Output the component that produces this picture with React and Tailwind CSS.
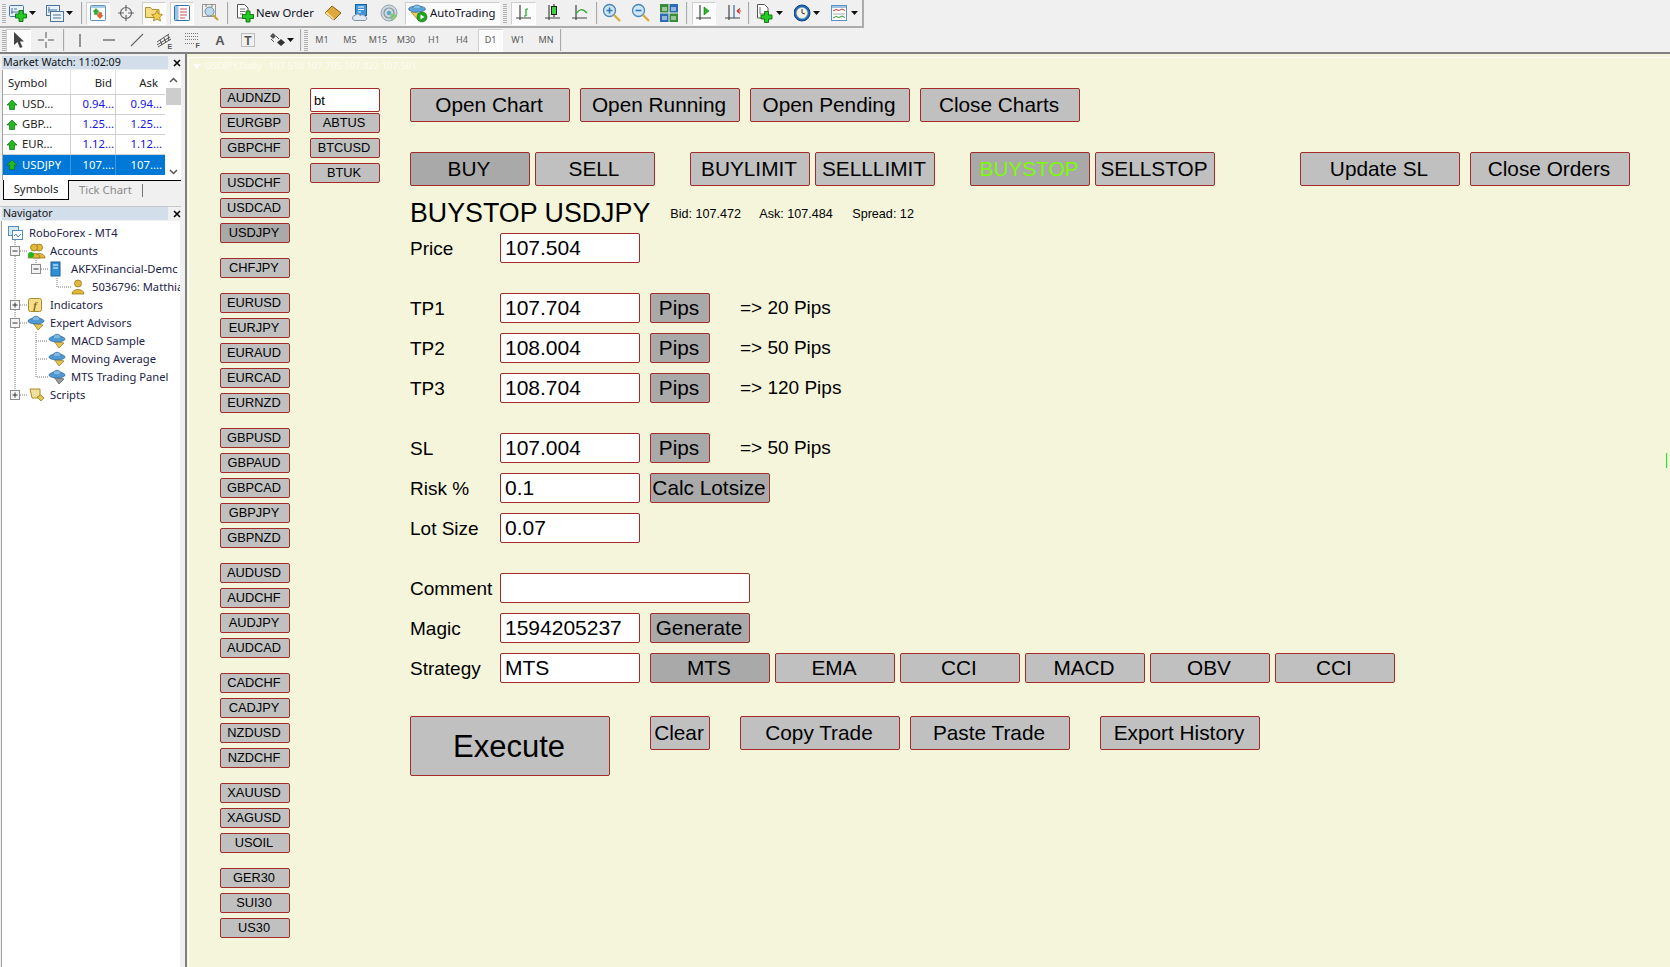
import React from "react";

const FONT = "font-['Noto_Sans','Open_Sans',sans-serif]";
const ARIAL = "font-['Liberation_Sans',Arial,sans-serif]";

const Plus = ({ x = 0, y = 0, s = 1 }) => (
  <path transform={`translate(${x} ${y}) scale(${s})`} d="M3.500 0h4v3.500H11v4H7.500V11h-4V7.500H0v-4h3.500z" fill="#22cc22" stroke="#0b6e0b" strokeWidth="0.900" />
);
const Axes = () => (
  <path d="M6 2v15M2 15h15" stroke="#444" strokeWidth="1.200" fill="none" />
);

const I = {
  grip: (h) => (
    <svg width="4" height={h} viewBox={`0 0 4 ${h}`}>
      {Array.from({ length: Math.floor(h / 2) }).map((_, i) => (
        <rect key={i} x="0" y={i * 2 + 1} width="4" height="1" fill="#b0b0b0" />
      ))}
    </svg>
  ),
  arr: (
    <svg width="8" height="5" viewBox="0 0 8 5"><path d="M0 0h7L3.500 4z" fill="#111" /></svg>
  ),
  newChart: (
    <svg width="18" height="18" viewBox="0 0 18 18">
      <rect x="0.500" y="1.500" width="14" height="11" rx="1" fill="#e8f0f8" stroke="#4a74a0" />
      <path d="M3 4v6M2 8h8M5 5h3" stroke="#4a74a0" fill="none" />
      <Plus x="6.500" y="6.500" />
    </svg>
  ),
  profile: (
    <svg width="18" height="18" viewBox="0 0 18 18">
      <rect x="0.500" y="1.500" width="13" height="10" fill="#e8f0f8" stroke="#4a74a0" />
      <rect x="4.500" y="7.500" width="13" height="10" fill="#eef4fa" stroke="#4a74a0" />
      <path d="M3 3v6M2 6h9M7 11h8M7 14h8" stroke="#4a74a0" fill="none" />
    </svg>
  ),
  marketWatch: (
    <svg width="16" height="16" viewBox="0 0 16 16">
      <rect x="0.500" y="0.500" width="15" height="15" rx="1" fill="#fff" stroke="#5b93c4" />
      <rect x="1" y="1" width="14" height="2" fill="#a9cbe8" />
      <path d="M6 3.500l3 3H7.500v3h-3v-3H3z" fill="#22b322" stroke="#127312" strokeWidth="0.400" />
      <path d="M10 13.500l-3-3h1.500v-3h3v3H13z" fill="#ef5a2a" stroke="#a83510" strokeWidth="0.400" />
    </svg>
  ),
  crosshair: (
    <svg width="18" height="18" viewBox="0 0 18 18" fill="none" stroke="#666" strokeWidth="1.200">
      <circle cx="9" cy="9" r="5.500" />
      <path d="M9 1v6M9 11v6M1 9h6M11 9h6" />
    </svg>
  ),
  favFolder: (
    <svg width="18" height="18" viewBox="0 0 18 18">
      <path d="M0.500 3.500h5l1.500 2h7v8h-13.500z" fill="#f8dc83" stroke="#b58f2c" />
      <path d="M12 6.500l1.700 3.600 3.800.4-2.800 2.600.8 3.900-3.500-2-3.500 2 .8-3.900-2.800-2.600 3.800-.4z" fill="#f5cf4d" stroke="#a37f1e" strokeWidth="0.800" />
    </svg>
  ),
  navWin: (
    <svg width="16" height="16" viewBox="0 0 16 16">
      <rect x="0.500" y="0.500" width="15" height="15" rx="1" fill="#fff" stroke="#2f6ea8" />
      <rect x="1" y="1" width="3.500" height="14" fill="#9cc3e4" />
      <path d="M6 4h7M6 7h7M6 10h7M6 13h5" stroke="#c75050" />
    </svg>
  ),
  tester: (
    <svg width="20" height="20" viewBox="0 0 20 20">
      <rect x="1.500" y="1.500" width="13" height="12" fill="#f4f0e8" stroke="#999" />
      <path d="M5 1v3M11 1v3" stroke="#777" />
      <circle cx="8.500" cy="8.500" r="4.500" fill="#bcd8ec" stroke="#6d8aa0" />
      <path d="M12 12l5 5" stroke="#c9a23c" strokeWidth="2.200" />
    </svg>
  ),
  newOrder: (
    <svg width="18" height="20" viewBox="0 0 18 20">
      <path d="M1.500 1.500h7l3.500 3.500v10h-10.500z" fill="#fff" stroke="#555" />
      <path d="M4 6h5M4 8.500h5M4 11h3" stroke="#777" />
      <Plus x="6.500" y="8" />
    </svg>
  ),
  book: (
    <svg width="18" height="16" viewBox="0 0 18 16">
      <path d="M1 8l7-7 9 7-7 7z" fill="#e0a93c" stroke="#8a5f18" />
      <path d="M1 8l9 7v-1.500L3 7z" fill="#f7e2a5" />
    </svg>
  ),
  signals: (
    <svg width="18" height="18" viewBox="0 0 18 18">
      <rect x="3.500" y="0.500" width="11" height="11" fill="#3f95dc" stroke="#20639c" />
      <path d="M6 3h6M6 5.500h6M6 8h3" stroke="#fff" />
      <path d="M3 16.500a2.500 2.500 0 0 1 0-5c1-2 4-2 5 0 2-1.500 5-.5 5 1 2 0 3 4-1 4z" fill="#e0e8f0" stroke="#7c92a8" />
    </svg>
  ),
  market: (
    <svg width="18" height="18" viewBox="0 0 18 18" fill="none">
      <circle cx="9" cy="9" r="8" fill="#cfd8dc" stroke="#97a7b0" />
      <circle cx="9" cy="9" r="5" stroke="#7d97a8" strokeWidth="1.200" />
      <circle cx="9" cy="9" r="2.200" fill="#5aa8c8" />
      <path d="M10 9l1 8c3-1 5-3 6-6z" fill="#7fc36a" opacity="0.800" />
    </svg>
  ),
  autoTrading: (
    <svg width="20" height="20" viewBox="0 0 20 20">
      <path d="M3 9l8 9 6-7z" fill="#efcf5d" stroke="#9f7f1f" strokeWidth="0.800" />
      <ellipse cx="9" cy="6" rx="8.500" ry="3" fill="#5ba3d8" stroke="#2c6a9c" strokeWidth="0.700" />
      <path d="M5 5c0-4 8-4 8 0" fill="#85bfe8" stroke="#2c6a9c" strokeWidth="0.700" />
      <circle cx="14" cy="14" r="5" fill="#1ea51e" stroke="#0b6a0b" strokeWidth="0.600" />
      <path d="M12.500 11.500l4 2.500-4 2.500z" fill="#fff" />
    </svg>
  ),
  bar: (
    <svg width="20" height="20" viewBox="0 0 20 20">
      <Axes />
      <path d="M12 6v7M10 13h2M12 6h2" stroke="#14a514" strokeWidth="1.200" fill="none" />
    </svg>
  ),
  candle: (
    <svg width="20" height="20" viewBox="0 0 20 20">
      <Axes />
      <path d="M11 1v13" stroke="#222" />
      <rect x="8.500" y="3.500" width="5" height="8" fill="#3fd13f" stroke="#222" />
    </svg>
  ),
  line: (
    <svg width="20" height="20" viewBox="0 0 20 20">
      <Axes />
      <path d="M6 11c3-5 6-6 11-1" stroke="#2aa52a" strokeWidth="1.200" fill="none" />
    </svg>
  ),
  zoomIn: (
    <svg width="20" height="20" viewBox="0 0 20 20">
      <circle cx="7.500" cy="7.500" r="6" fill="#cfe6f7" stroke="#4a86b8" strokeWidth="1.300" />
      <path d="M4.500 7.500h6M7.500 4.500v6" stroke="#3578b0" strokeWidth="1.600" />
      <path d="M12 12l6 6" stroke="#d6ad3f" strokeWidth="2.400" />
    </svg>
  ),
  zoomOut: (
    <svg width="20" height="20" viewBox="0 0 20 20">
      <circle cx="7.500" cy="7.500" r="6" fill="#cfe6f7" stroke="#4a86b8" strokeWidth="1.300" />
      <path d="M4.500 7.500h6" stroke="#3578b0" strokeWidth="1.600" />
      <path d="M12 12l6 6" stroke="#d6ad3f" strokeWidth="2.400" />
    </svg>
  ),
  tile: (
    <svg width="18" height="18" viewBox="0 0 18 18">
      <rect x="0" y="0" width="8.500" height="8.500" fill="#3a8c3a" />
      <rect x="9.500" y="0" width="8.500" height="8.500" fill="#2a6db5" />
      <rect x="0" y="9.500" width="8.500" height="8.500" fill="#2a6db5" />
      <rect x="9.500" y="9.500" width="8.500" height="8.500" fill="#3a8c3a" />
      <path d="M2 4h5M2 6h5M11 4h5M11 6h5M2 13h5M2 15h5M11 13h5M11 15h5" stroke="#fff" />
    </svg>
  ),
  shift: (
    <svg width="20" height="20" viewBox="0 0 20 20">
      <Axes />
      <path d="M10 4l5 4-5 4z" fill="#28b828" stroke="#0f7a0f" strokeWidth="0.600" />
    </svg>
  ),
  scroll: (
    <svg width="20" height="20" viewBox="0 0 20 20">
      <Axes />
      <path d="M11 2v13" stroke="#3468a8" strokeWidth="1.200" />
      <path d="M18 8h-4M14 8l3-2.500M14 8l3 2.500" stroke="#c03a2a" strokeWidth="1.200" fill="none" />
    </svg>
  ),
  templates: (
    <svg width="18" height="20" viewBox="0 0 18 20">
      <path d="M1.500 1.500h7l3.500 3.500v10h-10.500z" fill="#fff" stroke="#555" />
      <path d="M4 4v7h6" stroke="#777" fill="none" />
      <Plus x="5" y="8.500" />
    </svg>
  ),
  clock: (
    <svg width="18" height="18" viewBox="0 0 18 18">
      <circle cx="8" cy="9" r="8" fill="#1f6bb8" stroke="#0e4580" />
      <circle cx="8" cy="9" r="5.500" fill="#f6f3e4" stroke="#b8b8a8" strokeWidth="0.500" />
      <path d="M8 5v4l3 1" stroke="#333" fill="none" />
    </svg>
  ),
  indicatorsWin: (
    <svg width="18" height="16" viewBox="0 0 18 16">
      <rect x="0.500" y="0.500" width="15" height="15" fill="#fff" stroke="#5b93c4" />
      <rect x="1" y="1" width="14" height="2" fill="#9cc3e4" />
      <path d="M2 6l3-1.500 3 1 3-1.500 3 1.500" stroke="#c0392b" fill="none" />
      <path d="M2 9h12" stroke="#aaa" />
      <path d="M2 13l3-1.500 3 1 3-1.500 3 1.500" stroke="#2a9d2a" fill="none" />
    </svg>
  ),
  cursor: (
    <svg width="14" height="18" viewBox="0 0 14 18"><path d="M2 1v13l3.500-3 2.500 6 2.500-1-2.500-5.500H12z" fill="#444" /></svg>
  ),
  cross: (
    <svg width="16" height="16" viewBox="0 0 16 16"><path d="M8 0v6M8 10v6M0 8h6M10 8h6" stroke="#555" /></svg>
  ),
  vline: (
    <svg width="10" height="16" viewBox="0 0 10 16"><path d="M5 2v13" stroke="#555" strokeWidth="1.200" /></svg>
  ),
  hline: (
    <svg width="14" height="4" viewBox="0 0 14 4"><path d="M1 2h12" stroke="#555" strokeWidth="1.200" /></svg>
  ),
  trend: (
    <svg width="16" height="16" viewBox="0 0 16 16"><path d="M2 14L14 2" stroke="#666" strokeWidth="1.100" /></svg>
  ),
  channel: (
    <svg width="18" height="18" viewBox="0 0 18 18" fill="none" stroke="#555">
      <path d="M1 11L13 3M1 14L14 6M2 16L15 8" />
      <path d="M4 9l2 5M8 7l2 5M12 4l1 6" />
      <text x="11.500" y="17.500" fontSize="7" fontWeight="700" fill="#555" stroke="none" fontFamily="Liberation Sans">E</text>
    </svg>
  ),
  fibo: (
    <svg width="16" height="18" viewBox="0 0 16 18" fill="none" stroke="#777" strokeDasharray="1 1">
      <path d="M0 2.500h14M0 5.500h14M0 8.500h14M0 12.500h10" />
      <text x="10.500" y="17" fontSize="7" fontWeight="700" fill="#555" stroke="none" fontFamily="Liberation Sans">F</text>
    </svg>
  ),
  textT: (
    <svg width="14" height="14" viewBox="0 0 14 14">
      <rect x="0.500" y="0.500" width="13" height="13" fill="none" stroke="#888" strokeDasharray="1 1" />
      <text x="7" y="11.500" textAnchor="middle" fontSize="12" fontWeight="700" fill="#555" fontFamily="Liberation Sans">T</text>
    </svg>
  ),
  diamonds: (
    <svg width="18" height="14" viewBox="0 0 18 14">
      <path d="M5 0l3 3-3 3-3-3z" fill="#555" />
      <path d="M13 6l4 3.500-4 3.500-4-3.500z" fill="#333" />
      <path d="M3 6l3 3M8 3l3 3" stroke="#555" />
    </svg>
  ),
};

const TSlot = ({ className = "", children }) => (
  <div className={`flex h-full shrink-0 items-center justify-center ${className}`}>{children}</div>
);
const Pressed = ({ className = "", children }) => (
  <div className={`flex shrink-0 items-center justify-center border border-[#cfcfcf] border-r-white border-b-white bg-[#fbfbfb] ${className}`}>{children}</div>
);
const Sep = ({ className = "" }) => <div className={`h-[22px] w-[2px] shrink-0 border-r border-[#e8e8e8] bg-[#a8a8a8] ${className}`} />;
const Tf = ({ children }) => (
  <div className={`flex h-full w-[28px] shrink-0 items-center justify-center text-[9px] text-[#5a5a5a] ${FONT}`}>{children}</div>
);

function Toolbars() {
  return (
    <div className={`h-[54px] shrink-0 border-b-2 border-[#808080] ${FONT}`}>
      <div className="w-[864px] border-r-2 border-[#ababab]">
        <div className="flex h-[26px] items-center">
          <TSlot className="ml-[2px] w-[4px]">{I.grip(20)}</TSlot>
          <TSlot className="ml-[3px] w-[18px]">{I.newChart}</TSlot>
          <TSlot className="ml-[2px] w-[8px]">{I.arr}</TSlot>
          <TSlot className="ml-[9px] w-[18px]">{I.profile}</TSlot>
          <TSlot className="ml-[2px] w-[8px]">{I.arr}</TSlot>
          <Sep className="ml-[7px]" />
          <Pressed className="ml-[3px] h-[23px] w-[24px]">{I.marketWatch}</Pressed>
          <TSlot className="ml-[6px] w-[20px]">{I.crosshair}</TSlot>
          <Pressed className="ml-[6px] h-[23px] w-[24px]">{I.favFolder}</Pressed>
          <Pressed className="ml-[4px] h-[23px] w-[24px]">{I.navWin}</Pressed>
          <TSlot className="ml-[7px] w-[20px]">{I.tester}</TSlot>
          <Sep className="ml-[6px]" />
          <TSlot className="ml-[7px] w-[18px]">{I.newOrder}</TSlot>
          <div className="ml-[2px] w-[58px] shrink-0 whitespace-nowrap text-[11.3px] leading-none text-[#10102a]">New Order</div>
          <TSlot className="ml-[9px] w-[20px]">{I.book}</TSlot>
          <TSlot className="ml-[8px] w-[20px]">{I.signals}</TSlot>
          <TSlot className="ml-[8px] w-[20px]">{I.market}</TSlot>
          <Pressed className="ml-[6px] h-[23px] w-[95px] justify-start pl-[2px]">
            {I.autoTrading}
            <span className="ml-[2px] whitespace-nowrap text-[11.3px] leading-none text-[#10102a]">AutoTrading</span>
          </Pressed>
          <TSlot className="ml-[3px] w-[4px]">{I.grip(20)}</TSlot>
          <Pressed className="ml-[4px] h-[23px] w-[25px]">{I.bar}</Pressed>
          <TSlot className="ml-[7px] w-[20px]">{I.candle}</TSlot>
          <TSlot className="ml-[7px] w-[20px]">{I.line}</TSlot>
          <Sep className="ml-[6px]" />
          <TSlot className="ml-[4px] w-[20px]">{I.zoomIn}</TSlot>
          <TSlot className="ml-[9px] w-[20px]">{I.zoomOut}</TSlot>
          <TSlot className="ml-[9px] w-[18px]">{I.tile}</TSlot>
          <Sep className="ml-[8px]" />
          <Pressed className="ml-[4px] h-[23px] w-[24px]">{I.shift}</Pressed>
          <TSlot className="ml-[7px] w-[20px]">{I.scroll}</TSlot>
          <Sep className="ml-[5px]" />
          <TSlot className="ml-[6px] w-[18px]">{I.templates}</TSlot>
          <TSlot className="ml-[2px] w-[8px]">{I.arr}</TSlot>
          <TSlot className="ml-[10px] w-[18px]">{I.clock}</TSlot>
          <TSlot className="ml-[1px] w-[8px]">{I.arr}</TSlot>
          <TSlot className="ml-[10px] w-[18px]">{I.indicatorsWin}</TSlot>
          <TSlot className="ml-[2px] w-[8px]">{I.arr}</TSlot>
        </div>
        <div className="h-[2px] bg-[#ababab]" />
      </div>
      <div className="flex h-[24px] items-center">
        <TSlot className="ml-[2px] w-[4px]">{I.grip(22)}</TSlot>
        <Pressed className="h-[23px] w-[25px]">{I.cursor}</Pressed>
        <TSlot className="ml-[7px] w-[16px]">{I.cross}</TSlot>
        <Sep className="ml-[9px]" />
        <TSlot className="ml-[10px] w-[10px]">{I.vline}</TSlot>
        <TSlot className="ml-[17px] w-[14px]">{I.hline}</TSlot>
        <TSlot className="ml-[13px] w-[16px]">{I.trend}</TSlot>
        <TSlot className="ml-[11px] w-[18px]">{I.channel}</TSlot>
        <TSlot className="ml-[11px] w-[16px]">{I.fibo}</TSlot>
        <div className="ml-[12px] flex w-[14px] shrink-0 justify-center font-['Liberation_Sans'] text-[13px] font-bold leading-none text-[#555]">A</div>
        <TSlot className="ml-[14px] w-[14px]">{I.textT}</TSlot>
        <TSlot className="ml-[13px] w-[18px]">{I.diamonds}</TSlot>
        <TSlot className="ml-[1px] w-[8px]">{I.arr}</TSlot>
        <Sep className="ml-[5px]" />
        <TSlot className="ml-[2px] w-[4px]">{I.grip(22)}</TSlot>
        <Tf>M1</Tf>
        <Tf>M5</Tf>
        <Tf>M15</Tf>
        <Tf>M30</Tf>
        <Tf>H1</Tf>
        <Tf>H4</Tf>
        <Pressed className={`ml-[2px] h-[23px] w-[25px] text-[9px] text-[#5a5a5a] ${FONT}`}>D1</Pressed>
        <div className="ml-[1px] flex h-full">
          <Tf>W1</Tf>
          <Tf>MN</Tf>
        </div>
        <Sep />
      </div>
    </div>
  );
}

const UpArrow = (
  <svg width="12" height="12" viewBox="0 0 12 12"><path d="M6 1l5 5H8.500v4.500h-5V6H1z" fill="#22b822" stroke="#0e6e0e" strokeWidth="0.700" /></svg>
);

const CloseX = () => (
  <svg width="8" height="8" viewBox="0 0 8 8"><path d="M1 1l6 6M7 1L1 7" stroke="#000" strokeWidth="1.600" /></svg>
);

const Title = ({ children, w }) => (
  <div className="flex items-center pl-[2px]">
    <div className={`h-full whitespace-nowrap bg-[#d2deea] pl-[1px] text-[10.7px] leading-[13px] text-[#111] ${w}`}>{children}</div>
    <div className="ml-[4px] flex w-[9px] justify-center"><CloseX /></div>
  </div>
);

const rows = [
  ["USD...", "0.94...", "0.94..."],
  ["GBP...", "1.25...", "1.25..."],
  ["EUR...", "1.12...", "1.12..."],
  ["USDJPY", "107....", "107...."],
];

function MarketWatch() {
  return (
    <>
      <div className="mt-[2px] h-[13px]">
        <Title w="w-[166px]">Market Watch: 11:02:09</Title>
      </div>
      <div className="mt-[1px] flex h-[110px]">
        <div className="ml-[2px] w-[163px] border-l border-[#a0a0a0] bg-white text-[11.3px]">
          <div className="grid h-[25px] grid-cols-[68px_45px_49px] items-center border-b border-[#d0d0d0] text-[#222]">
            <div className="flex h-full items-center border-r border-[#e4e4e4] pl-[5px] pt-[3px]">Symbol</div>
            <div className="flex h-full items-center justify-end border-r border-[#e4e4e4] pr-[3px] pt-[3px]">Bid</div>
            <div className="flex h-full items-center justify-end pr-[7px] pt-[3px]">Ask</div>
          </div>
          {rows.map((r, i) => {
            const sel = i === 3;
            return (
              <div
                key={r[0]}
                className={`grid h-[20px] grid-cols-[68px_45px_49px] items-center ${sel ? "bg-[#0078d7] text-white" : "border-b border-[#d0d0d0]"}`}
              >
                <div className={`flex h-full items-center border-r pl-[3px] ${sel ? "border-[#3d97df]" : "border-[#d0d0d0] text-[#222]"}`}>
                  {UpArrow}
                  <span className="ml-[4px] whitespace-nowrap">{r[0]}</span>
                </div>
                <div className={`flex h-full items-center justify-end border-r pr-[1px] ${sel ? "border-[#3d97df]" : "border-[#d0d0d0] text-[#1414e6]"}`}>{r[1]}</div>
                <div className={`flex h-full items-center justify-end pr-[3px] ${sel ? "" : "text-[#1414e6]"}`}>{r[2]}</div>
              </div>
            );
          })}
        </div>
        <div className="flex w-[16px] flex-col items-center bg-white">
          <svg className="mt-[7px]" width="9" height="6" viewBox="0 0 9 6"><path d="M1 5l3.500-3.500L8 5" fill="none" stroke="#555" strokeWidth="1.500" /></svg>
          <div className="mt-[5px] h-[17px] w-[15px] bg-[#cdcdcd]" />
          <svg className="mt-[64px]" width="9" height="6" viewBox="0 0 9 6"><path d="M1 1l3.500 3.500L8 1" fill="none" stroke="#555" strokeWidth="1.500" /></svg>
        </div>
      </div>
      <div className="flex h-[20px] text-[11.3px]">
        <div className="ml-[3px] flex w-[66px] items-center justify-center border-x border-b border-x-black border-b-black bg-white text-[#222]">Symbols</div>
        <div className="flex w-[112px] items-center border-t border-black">
          <span className="ml-[10px] whitespace-nowrap text-[#8a8a8a]">Tick Chart</span>
          <div className="ml-[10px] h-[13px] w-[1px] bg-[#777]" />
        </div>
      </div>
      <div className="h-[7px] border-b border-[#c8c8c8]" />
      <div className="h-[14px]">
        <Title w="w-[166px]">Navigator</Title>
      </div>
    </>
  );
}

const Box = ({ x, minus }) => (
  <g>
    <rect x={x - 4.500} y="4.500" width="9" height="9" fill="#f4f4f4" stroke="#8c8c8c" />
    <path d={minus ? `M${x - 2.500} 9h5` : `M${x - 2.500} 9h5M${x} 6.500v5`} stroke="#333" />
  </g>
);
const D = ({ d }) => <path d={d} stroke="#777" strokeDasharray="1 1" fill="none" />;

const Hat = ({ x, gray }) => (
  <g transform={`translate(${x} 1)`}>
    <path d="M5 8l5 7 5-5z" fill={gray ? "#9a9a9a" : "#e6c44d"} stroke={gray ? "#555" : "#8f7218"} strokeWidth="0.700" />
    <ellipse cx="8" cy="6" rx="8" ry="3" fill="#4f9ad3" stroke="#26608f" strokeWidth="0.700" />
    <path d="M4 5c0-5 8-5 8 0" fill="#7cb9e6" stroke="#26608f" strokeWidth="0.700" />
  </g>
);

const Person = ({ x, color = "#e4b93a" }) => (
  <g>
    <circle cx={x + 6} cy="5.500" r="3.500" fill={color} stroke="#8a6a14" strokeWidth="0.700" />
    <path d={`M${x} 16c0-6 12-6 12 0z`} fill={color} stroke="#8a6a14" strokeWidth="0.700" />
  </g>
);

function TreeRow({ w, label, children }) {
  return (
    <div className="flex h-[18px] shrink-0 items-center">
      <svg width={w} height="18" viewBox={`2 0 ${w} 18`} className="shrink-0">{children}</svg>
      <span className="whitespace-nowrap text-[11.2px] leading-none text-[#222248]">{label}</span>
    </div>
  );
}

function Navigator() {
  const trunk = "M15 0v18";
  return (
    <div className="ml-[1px] w-[179px] flex-1 overflow-hidden border-l border-[#a0a0a0] bg-white pt-[3px]">
      <TreeRow w={27} label="RoboForex - MT4">
        <D d="M15 16v2" />
        <g transform="translate(8 2)">
          <rect x="0.500" y="0.500" width="10" height="9" fill="#d8e8f6" stroke="#4f8cc0" />
          <rect x="4.500" y="4.500" width="10" height="9" fill="#fff" stroke="#4f8cc0" />
          <path d="M6 10l2-2 2 3 3-3" stroke="#4f8cc0" fill="none" />
        </g>
      </TreeRow>
      <TreeRow w={48} label="Accounts">
        <D d={trunk} />
        <D d="M20 9h8" />
        <Box x={15} minus />
        <Person x={33} />
        <Person x={28} />
        <circle cx="31" cy="13" r="3" fill="#22b822" />
      </TreeRow>
      <TreeRow w={69} label="AKFXFinancial-Demc">
        <D d={trunk} />
        <D d="M36 0v4M41 9h8" />
        <Box x={36} minus />
        <rect x="51" y="2" width="9" height="14" fill="#2f8fd8" stroke="#1a5f98" />
        <path d="M53 5h5M53 8h5" stroke="#fff" />
      </TreeRow>
      <TreeRow w={90} label="5036796: Matthia">
        <D d={trunk} />
        <D d="M57 0v9h14" />
        <Person x={72} />
      </TreeRow>
      <TreeRow w={48} label="Indicators">
        <D d={trunk} />
        <D d="M20 9h8" />
        <Box x={15} />
        <rect x="28.500" y="2.500" width="13" height="13" rx="2" fill="#f6dd8a" stroke="#a98b2c" />
        <text x="35" y="13" textAnchor="middle" fontSize="11" fontStyle="italic" fontWeight="700" fill="#8a6a14" fontFamily="Liberation Serif">f</text>
      </TreeRow>
      <TreeRow w={48} label="Expert Advisors">
        <D d={trunk} />
        <D d="M20 9h8" />
        <Box x={15} minus />
        <Hat x={28} />
      </TreeRow>
      <TreeRow w={69} label="MACD Sample">
        <D d={trunk} />
        <D d="M36 0v18M36 9h12" />
        <Hat x={49} />
      </TreeRow>
      <TreeRow w={69} label="Moving Average">
        <D d={trunk} />
        <D d="M36 0v18M36 9h12" />
        <Hat x={49} />
      </TreeRow>
      <TreeRow w={69} label="MTS Trading Panel">
        <D d={trunk} />
        <D d="M36 0v9h12" />
        <Hat x={49} gray />
      </TreeRow>
      <TreeRow w={48} label="Scripts">
        <D d="M15 0v5M20 9h8" />
        <Box x={15} />
        <path d="M30 3h10v9h-8z" fill="#f3df9c" stroke="#a98b2c" />
        <path d="M37 11l4 4 3-3-3-3z" fill="#e6c44d" stroke="#8f7218" strokeWidth="0.700" />
      </TreeRow>
    </div>
  );
}

const btnBase = `shrink-0 rounded-[2px] border border-[#a52a2a] text-black ${ARIAL}`;

const Btn = ({ className = "", on, label, color }) => (
  <button className={`${btnBase} ${on ? "bg-[#a9a9a9]" : "bg-[#c0c0c0]"} ${color || ""} ${className}`}>{label}</button>
);
const Sym = ({ label, on }) => (
  <Btn on={on} label={label} className="h-[20px] w-[70px] pr-[2px] text-[12.8px] leading-none" />
);
const Col = ({ children }) => <div className="flex flex-col gap-[5px]">{children}</div>;
const Big = ({ label, on, w = "w-[160px]", color }) => (
  <Btn on={on} label={label} color={color} className={`h-[34px] pr-[2px] text-[20.8px] leading-none ${w}`} />
);
const Input = ({ value, w = "w-[140px]" }) => (
  <input
    readOnly
    value={value}
    className={`h-[30px] shrink-0 rounded-[2px] border border-[#a52a2a] bg-white px-[4px] text-[21px] text-black outline-none ${w} ${ARIAL}`}
  />
);
const Row = ({ label, value, mt = "mt-[10px]", w, children }) => (
  <div className={`flex h-[30px] items-center ${mt}`}>
    <div className="w-[90px] shrink-0 whitespace-nowrap text-[19px] leading-none text-black">{label}</div>
    <Input value={value} w={w} />
    {children}
  </div>
);
const Small = ({ className = "", label, on }) => (
  <Btn on={on} label={label} className={`ml-[10px] h-[30px] pr-[2px] text-[20.8px] leading-none ${className}`} />
);
const Note = ({ children }) => <div className="mb-[2px] ml-[30px] whitespace-nowrap text-[19px] leading-none text-black">{children}</div>;
const Strat = ({ label, on, first }) => (
  <Btn on={on} label={label} className={`${first ? "ml-[10px]" : "ml-[5px]"} h-[30px] w-[120px] pr-[2px] text-[20.8px] leading-none`} />
);

function Panel() {
  return (
    <div className="flex">
      <div className="flex w-[70px] shrink-0 flex-col gap-[15px]">
        <Col><Sym label="AUDNZD" /><Sym label="EURGBP" /><Sym label="GBPCHF" /></Col>
        <Col><Sym label="USDCHF" /><Sym label="USDCAD" /><Sym label="USDJPY" on /></Col>
        <Col><Sym label="CHFJPY" /></Col>
        <Col><Sym label="EURUSD" /><Sym label="EURJPY" /><Sym label="EURAUD" /><Sym label="EURCAD" /><Sym label="EURNZD" /></Col>
        <Col><Sym label="GBPUSD" /><Sym label="GBPAUD" /><Sym label="GBPCAD" /><Sym label="GBPJPY" /><Sym label="GBPNZD" /></Col>
        <Col><Sym label="AUDUSD" /><Sym label="AUDCHF" /><Sym label="AUDJPY" /><Sym label="AUDCAD" /></Col>
        <Col><Sym label="CADCHF" /><Sym label="CADJPY" /><Sym label="NZDUSD" /><Sym label="NZDCHF" /></Col>
        <Col><Sym label="XAUUSD" /><Sym label="XAGUSD" /><Sym label="USOIL" /></Col>
        <Col><Sym label="GER30" /><Sym label="SUI30" /><Sym label="US30" /></Col>
      </div>
      <div className="ml-[20px] flex w-[70px] shrink-0 flex-col">
        <input
          readOnly
          value="bt"
          className={`h-[24px] w-[70px] rounded-[2px] border border-[#a52a2a] bg-white px-[3px] text-[13px] text-black outline-none ${ARIAL}`}
        />
        <div className="mt-[1px] flex flex-col gap-[5px]">
          <Sym label="ABTUS" />
          <Sym label="BTCUSD" />
          <Sym label="BTUK" />
        </div>
      </div>
      <div className={`ml-[30px] min-w-0 flex-1 ${ARIAL}`}>
        <div className="flex gap-[10px]">
          <Big label="Open Chart" />
          <Big label="Open Running" />
          <Big label="Open Pending" />
          <Big label="Close Charts" />
        </div>
        <div className="mt-[30px] flex">
          <Big label="BUY" on w="w-[120px]" />
          <div className="ml-[5px]"><Big label="SELL" w="w-[120px]" /></div>
          <div className="ml-[35px]"><Big label="BUYLIMIT" w="w-[120px]" /></div>
          <div className="ml-[5px]"><Big label="SELLLIMIT" w="w-[120px]" /></div>
          <div className="ml-[35px]"><Big label="BUYSTOP" on w="w-[120px]" color="!text-[#7cfc00]" /></div>
          <div className="ml-[5px]"><Big label="SELLSTOP" w="w-[120px]" /></div>
          <div className="ml-[85px]"><Big label="Update SL" /></div>
          <div className="ml-[10px]"><Big label="Close Orders" /></div>
        </div>
        <div className="flex h-[47px] items-center pt-[7px]">
          <div className="whitespace-nowrap text-[26.8px] leading-none text-black">BUYSTOP USDJPY</div>
          <div className="ml-[20px] mt-[3px] flex whitespace-nowrap text-[12.6px] leading-none text-black">
            <span className="w-[89px]">Bid: 107.472</span>
            <span className="w-[93px]">Ask: 107.484</span>
            <span>Spread: 12</span>
          </div>
        </div>
        <Row label="Price" value="107.504" mt="mt-0" />
        <Row label="TP1" value="107.704" mt="mt-[30px]">
          <Small label="Pips" on className="w-[60px]" />
          <Note>=&gt; 20 Pips</Note>
        </Row>
        <Row label="TP2" value="108.004">
          <Small label="Pips" on className="w-[60px]" />
          <Note>=&gt; 50 Pips</Note>
        </Row>
        <Row label="TP3" value="108.704">
          <Small label="Pips" on className="w-[60px]" />
          <Note>=&gt; 120 Pips</Note>
        </Row>
        <Row label="SL" value="107.004" mt="mt-[30px]">
          <Small label="Pips" on className="w-[60px]" />
          <Note>=&gt; 50 Pips</Note>
        </Row>
        <Row label="Risk %" value="0.1">
          <Small label="Calc Lotsize" on className="w-[120px]" />
        </Row>
        <Row label="Lot Size" value="0.07" />
        <Row label="Comment" value="" mt="mt-[30px]" w="w-[250px]" />
        <Row label="Magic" value="1594205237">
          <Small label="Generate" on className="w-[100px]" />
        </Row>
        <Row label="Strategy" value="MTS">
          <Strat first on label="MTS" />
          <Strat label="EMA" />
          <Strat label="CCI" />
          <Strat label="MACD" />
          <Strat label="OBV" />
          <Strat label="CCI" />
        </Row>
        <div className="mt-[33px] flex items-start">
          <Btn label="Execute" className="h-[60px] w-[200px] pr-[2px] text-[31px] leading-none" />
          <div className="ml-[40px]"><Btn label="Clear" className="h-[34px] w-[60px] pr-[2px] text-[20.8px] leading-none" /></div>
          <div className="ml-[30px]"><Big label="Copy Trade" /></div>
          <div className="ml-[10px]"><Big label="Paste Trade" /></div>
          <div className="ml-[30px]"><Big label="Export History" /></div>
        </div>
      </div>
    </div>
  );
}

export default function App() {
  return (
    <div className={`relative flex h-[967px] w-[1670px] flex-col overflow-hidden bg-[#f0f0f0] ${FONT}`}>
      <Toolbars />
      <div className="flex min-h-0 flex-1">
        <div className="flex w-[181px] shrink-0 flex-col">
          <MarketWatch />
          <Navigator />
        </div>
        <div className="w-[4px] shrink-0" />
        <div className="flex min-w-0 flex-1 border-l-2 border-[#808080] bg-[#f5f5dc] pl-[1px] pt-[3px]">
          <div className="min-w-0 flex-1 border-l border-t border-white pl-[31px]">
            <div className="-ml-[27px] mt-[1px] flex h-[14px] items-center whitespace-nowrap text-[9.5px] leading-none text-[#fdfdf2]">
              <svg width="8" height="5" viewBox="0 0 8 5"><path d="M0 0h8L4 5z" fill="#fff" /></svg>
              <span className="ml-[4px]">USDJPY,Daily</span>
              <span className="ml-[7px]">107.510 107.705 107.422 107.501</span>
            </div>
            <div className="pt-[15px]">
              <Panel />
            </div>
          </div>
        </div>
      </div>
      <div className="absolute left-[1666px] top-[453px] h-[15px] w-[1px] bg-[#00ff00]" />
    </div>
  );
}
